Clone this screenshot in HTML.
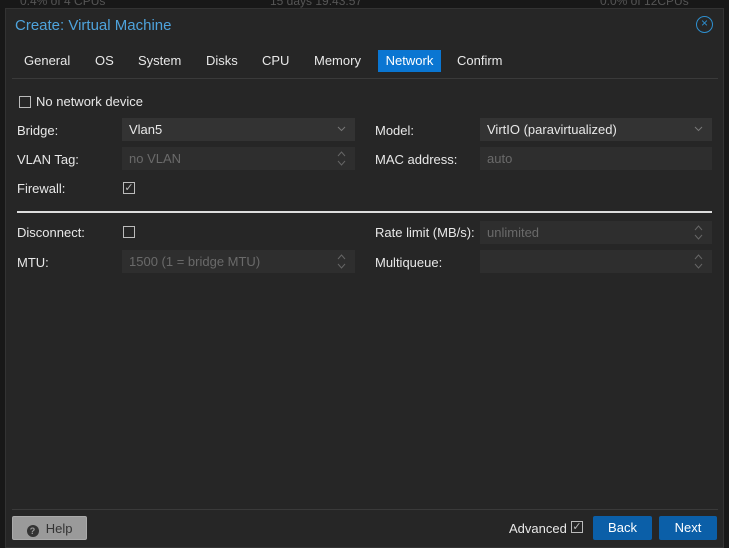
<!DOCTYPE html>
<html><head><style>
*{box-sizing:border-box;margin:0;padding:0}
body{width:729px;height:542px;background:#181818;font-family:"Liberation Sans",sans-serif;font-size:13px;color:#e8e8e8;position:relative;overflow:hidden}
.abs{position:absolute}
.top{color:#555;font-size:12px;top:-6px}
.dlg{left:5px;top:8px;width:719px;height:540px;background:#262626;border:1px solid #333}
.title{left:15px;top:17px;font-size:15px;color:#4ea3dc}
.close{left:696px;top:16px;width:17px;height:17px;border:1.5px solid #2e8fcf;border-radius:50%;color:#2e8fcf;font-size:12px;line-height:13px;text-align:center}
.tab{top:50px;height:22px;line-height:21px;padding:0 5px;font-size:13px;color:#e8e8e8}
.tab.on{background:#0a76d2;color:#fff}
.line{left:12px;width:706px;height:1px;background:#3a3a3a}
.lbl{font-size:13px}
.in{height:23px;background:#333333;line-height:24px;padding-left:7px;font-size:13px}
.dis{color:#6a6a6a;background:#2e2e2e}
.cb{width:12px;height:12px;border:1px solid #bbb}
.arr{position:absolute;right:9px;top:8px}
.spin{position:absolute;right:9px;top:4px}
.btn{top:516px;height:24px;line-height:24px;text-align:center;font-size:13px;border-radius:2px}
</style></head><body>
<div class="abs top" style="left:20px">0.4% of 4 CPUs</div>
<div class="abs top" style="left:270px">15 days 19:43:57</div>
<div class="abs top" style="left:600px">0.0% of 12CPUs</div>
<div class="abs dlg"></div>
<div class="abs title">Create: Virtual Machine</div>
<div class="abs close">×</div>
<div class="abs tab" style="left:19px">General</div>
<div class="abs tab" style="left:90px">OS</div>
<div class="abs tab" style="left:133px">System</div>
<div class="abs tab" style="left:201px">Disks</div>
<div class="abs tab" style="left:257px">CPU</div>
<div class="abs tab" style="left:309px">Memory</div>
<div class="abs tab on" style="left:378px;width:63px;text-align:center">Network</div>
<div class="abs tab" style="left:452px">Confirm</div>
<div class="abs line" style="top:78px"></div>
<div class="abs cb" style="left:19px;top:96px"></div>
<div class="abs lbl" style="left:36px;top:94px">No network device</div>

<div class="abs lbl" style="left:17px;top:123px">Bridge:</div>
<div class="abs in" style="left:122px;top:118px;width:233px">Vlan5<svg class="arr" width="9" height="6"><path d="M1 1L4.5 4.5L8 1" stroke="#777" fill="none"/></svg></div>
<div class="abs lbl" style="left:375px;top:123px">Model:</div>
<div class="abs in" style="left:480px;top:118px;width:232px">VirtIO (paravirtualized)<svg class="arr" width="9" height="6"><path d="M1 1L4.5 4.5L8 1" stroke="#777" fill="none"/></svg></div>

<div class="abs lbl" style="left:17px;top:152px">VLAN Tag:</div>
<div class="abs in dis" style="left:122px;top:147px;width:233px">no VLAN<svg class="spin" width="9" height="15"><path d="M1 5L4.5 1L8 5M1 10L4.5 14L8 10" stroke="#666" fill="none"/></svg></div>
<div class="abs lbl" style="left:375px;top:152px">MAC address:</div>
<div class="abs in dis" style="left:480px;top:147px;width:232px">auto</div>

<div class="abs lbl" style="left:17px;top:181px">Firewall:</div>
<div class="abs cb" style="left:123px;top:182px;color:#bbb;font-size:11px;line-height:10px;text-align:center">✓</div>

<div class="abs" style="left:17px;top:211px;width:695px;height:2px;background:#ddd"></div>

<div class="abs lbl" style="left:17px;top:225px">Disconnect:</div>
<div class="abs cb" style="left:123px;top:226px"></div>
<div class="abs lbl" style="left:375px;top:225px">Rate limit (MB/s):</div>
<div class="abs in dis" style="left:480px;top:221px;width:232px">unlimited<svg class="spin" width="9" height="15"><path d="M1 5L4.5 1L8 5M1 10L4.5 14L8 10" stroke="#666" fill="none"/></svg></div>

<div class="abs lbl" style="left:17px;top:255px">MTU:</div>
<div class="abs in dis" style="left:122px;top:250px;width:233px">1500 (1 = bridge MTU)<svg class="spin" width="9" height="15"><path d="M1 5L4.5 1L8 5M1 10L4.5 14L8 10" stroke="#666" fill="none"/></svg></div>
<div class="abs lbl" style="left:375px;top:255px">Multiqueue:</div>
<div class="abs in dis" style="left:480px;top:250px;width:232px"><svg class="spin" width="9" height="15"><path d="M1 5L4.5 1L8 5M1 10L4.5 14L8 10" stroke="#666" fill="none"/></svg></div>

<div class="abs line" style="top:509px"></div>
<div class="abs btn" style="left:12px;width:75px;background:#9a9a9a;border:1px solid #aaa;color:#333"><span style="display:inline-block;width:12px;height:12px;border-radius:50%;background:#333;color:#9a9a9a;font-size:9px;line-height:12px;font-weight:bold;vertical-align:-1px">?</span>&nbsp; Help</div>
<div class="abs lbl" style="left:509px;top:521px">Advanced</div>
<div class="abs cb" style="left:571px;top:521px;color:#bbb;font-size:11px;line-height:10px;text-align:center">✓</div>
<div class="abs btn" style="left:593px;width:59px;background:#0b5fa8;color:#fff">Back</div>
<div class="abs btn" style="left:659px;width:58px;background:#0b5fa8;color:#fff">Next</div>
</body></html>
